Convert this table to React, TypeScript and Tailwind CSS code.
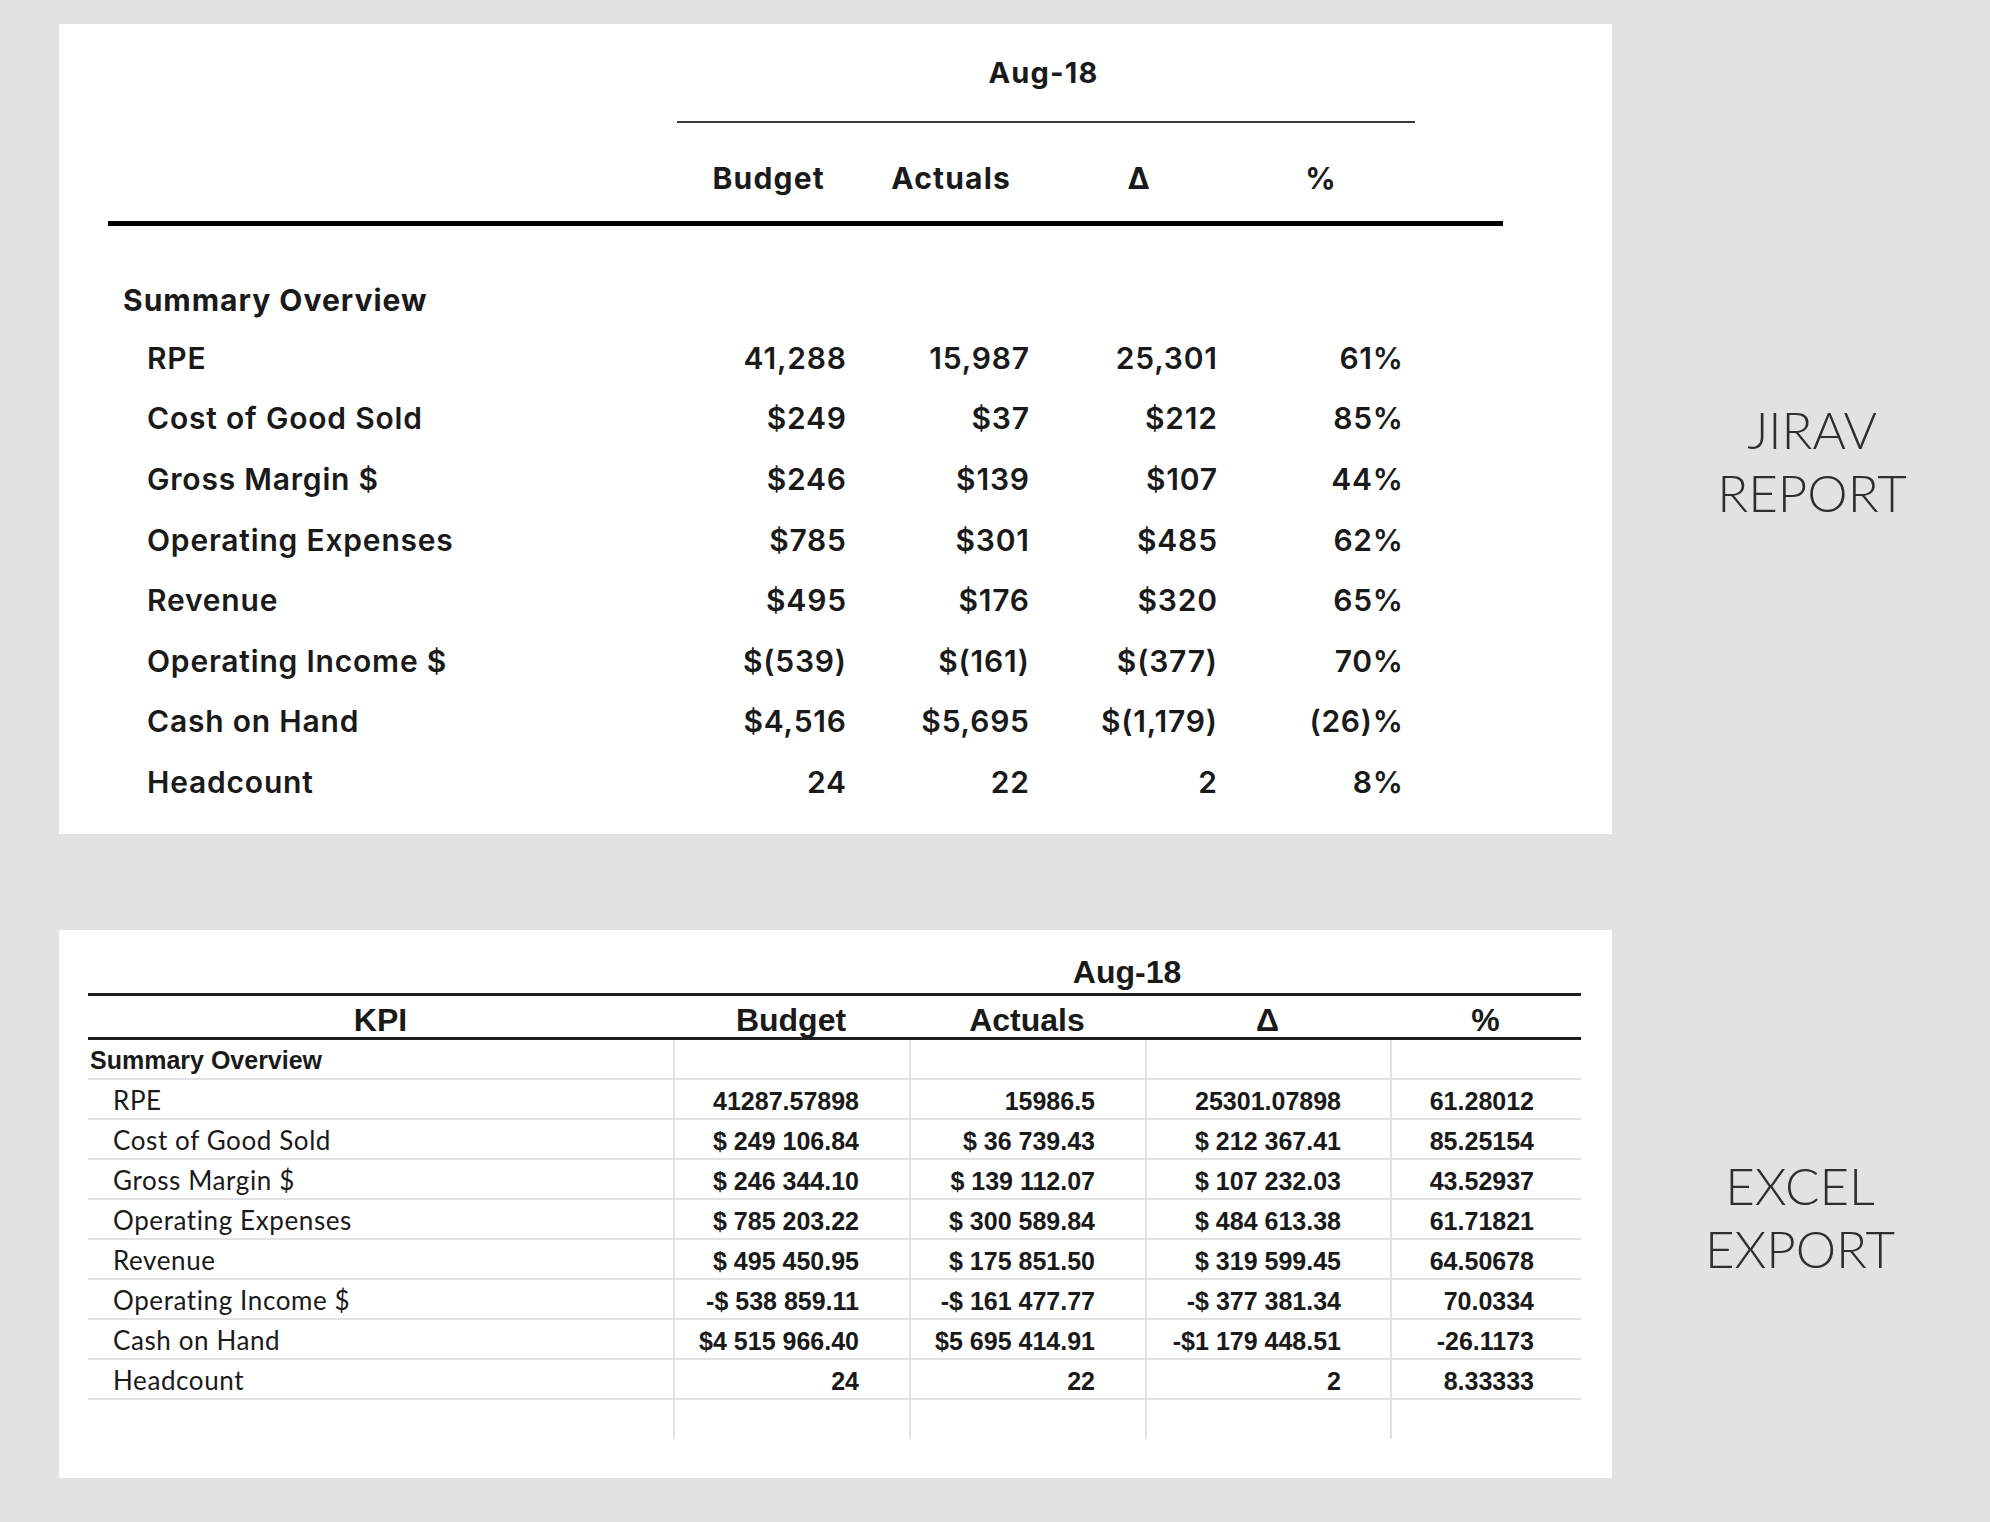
import React from "react"

const jiravRows = [
  ["RPE", "41,288", "15,987", "25,301", "61%"],
  ["Cost of Good Sold", "$249", "$37", "$212", "85%"],
  ["Gross Margin $", "$246", "$139", "$107", "44%"],
  ["Operating Expenses", "$785", "$301", "$485", "62%"],
  ["Revenue", "$495", "$176", "$320", "65%"],
  ["Operating Income $", "$(539)", "$(161)", "$(377)", "70%"],
  ["Cash on Hand", "$4,516", "$5,695", "$(1,179)", "(26)%"],
  ["Headcount", "24", "22", "2", "8%"],
]

const excelRows = [
  ["RPE", "41287.57898", "15986.5", "25301.07898", "61.28012"],
  ["Cost of Good Sold", "$ 249 106.84", "$ 36 739.43", "$ 212 367.41", "85.25154"],
  ["Gross Margin $", "$ 246 344.10", "$ 139 112.07", "$ 107 232.03", "43.52937"],
  ["Operating Expenses", "$ 785 203.22", "$ 300 589.84", "$ 484 613.38", "61.71821"],
  ["Revenue", "$ 495 450.95", "$ 175 851.50", "$ 319 599.45", "64.50678"],
  ["Operating Income $", "-$ 538 859.11", "-$ 161 477.77", "-$ 377 381.34", "70.0334"],
  ["Cash on Hand", "$4 515 966.40", "$5 695 414.91", "-$1 179 448.51", "-26.1173"],
  ["Headcount", "24", "22", "2", "8.33333"],
]

// right padding of each value column in the excel sheet
const excelPad = ["pr-[50px]", "pr-[50px]", "pr-[49px]", "pr-[47px]"]

function SideLabel({ lines, className }: { lines: string[]; className: string }) {
  return (
    <div className={`w-[286px] text-center font-['Lato',sans-serif] font-light text-[51px] leading-[63px] text-[#2e2e2e] ${className}`}>
      {lines.map((l) => (
        <div key={l}>{l}</div>
      ))}
    </div>
  )
}

function JiravReport() {
  const cols = "grid grid-cols-[554px_184px_183px_188px_186px]"
  return (
    <div className="w-[1553px] h-[810px] bg-white pt-[32px] pl-[49px] font-['Inter',sans-serif] text-[#1a1a1a]">
      <div className="w-[1395px]">
        {/* period header */}
        <div className="ml-[569px] w-[738px]">
          <div className="text-center pr-[5px] text-[29px] leading-[34px] font-bold tracking-[1.2px]">Aug-18</div>
          <div className="mt-[31px] h-[2px] bg-[#3a3a3a]" />
        </div>

        {/* column headers */}
        <div className={`mt-[37px] ${cols} text-[30px] leading-[36px] font-bold tracking-[1.2px]`}>
          <div />
          <div className="text-right pr-[21px]">Budget</div>
          <div className="text-right pr-[18px]">Actuals</div>
          <div className="text-right pr-[66px]">Δ</div>
          <div className="text-right pr-[66px]">%</div>
        </div>
        <div className="mt-[25px] h-[5px] bg-black" />

        <div className="mt-[46px] h-[56px] flex items-center pl-[15px] text-[30px] font-bold tracking-[1px]">Summary Overview</div>
        {jiravRows.map(([label, ...vals]) => (
          <div key={label} className={`h-[60.6px] ${cols} items-center text-[30px] font-semibold tracking-[0.8px]`}>
            <div className="pl-[39px]">{label}</div>
            {vals.map((v, i) => (
              <div key={i} className="text-right -mr-[0.8px]">{v}</div>
            ))}
          </div>
        ))}
      </div>
    </div>
  )
}

function ExcelExport() {
  const cols = "grid grid-cols-[585px_236px_236px_245px_191px]"
  return (
    <div className="w-[1553px] h-[548px] bg-white pt-[24px] pl-[29px]">
      <div className="w-[1493px] font-['Liberation_Sans',Arial,sans-serif] text-[#1a1a1a]">
        <div className="grid grid-cols-[585px_908px]">
          <div />
          <div className="text-center text-[32px] leading-[36px] font-bold">Aug-18</div>
        </div>
        <div className="mt-[3px] h-[3px] bg-[#1f1f1f]" />
        <div className={`${cols} h-[41px] pb-[2px] items-center text-center text-[32px] font-bold`}>
          <div>KPI</div>
          <div>Budget</div>
          <div>Actuals</div>
          <div>Δ</div>
          <div>%</div>
        </div>
        <div className="h-[3px] bg-[#1f1f1f]" />

        <div className={`${cols} h-[40px] border-b-2 border-[#e2e2e2]`}>
          <div className="flex items-center pt-[2px] pl-[2px] text-[25px] font-bold">Summary Overview</div>
          <div className="border-l-2 border-[#e2e2e2]" />
          <div className="border-l-2 border-[#e2e2e2]" />
          <div className="border-l-2 border-[#e2e2e2]" />
          <div className="border-l-2 border-[#e2e2e2]" />
        </div>
        {excelRows.map(([label, ...vals]) => (
          <div key={label} className={`${cols} h-[40px] border-b-2 border-[#e2e2e2]`}>
            <div className="flex items-center pl-[25px] font-['Lato',sans-serif] text-[26px] tracking-[0.6px]">{label}</div>
            {vals.map((v, i) => (
              <div key={i} className={`flex items-center justify-end pt-[3px] ${excelPad[i]} border-l-2 border-[#e2e2e2] text-[25px] font-bold whitespace-pre`}>
                {v}
              </div>
            ))}
          </div>
        ))}
        <div className={`${cols} h-[39px]`}>
          <div />
          <div className="border-l-2 border-[#e2e2e2]" />
          <div className="border-l-2 border-[#e2e2e2]" />
          <div className="border-l-2 border-[#e2e2e2]" />
          <div className="border-l-2 border-[#e2e2e2]" />
        </div>
      </div>
    </div>
  )
}

export default function App() {
  return (
    <div className="w-[1990px] h-[1522px] bg-[#e2e2e2] pt-[24px] pl-[59px] flex flex-col gap-[96px]">
      <div className="flex">
        <JiravReport />
        <SideLabel lines={["JIRAV", "REPORT"]} className="ml-[57px] pt-[374px]" />
      </div>
      <div className="flex">
        <ExcelExport />
        <SideLabel lines={["EXCEL", "EXPORT"]} className="ml-[45px] pt-[224px]" />
      </div>
    </div>
  )
}
